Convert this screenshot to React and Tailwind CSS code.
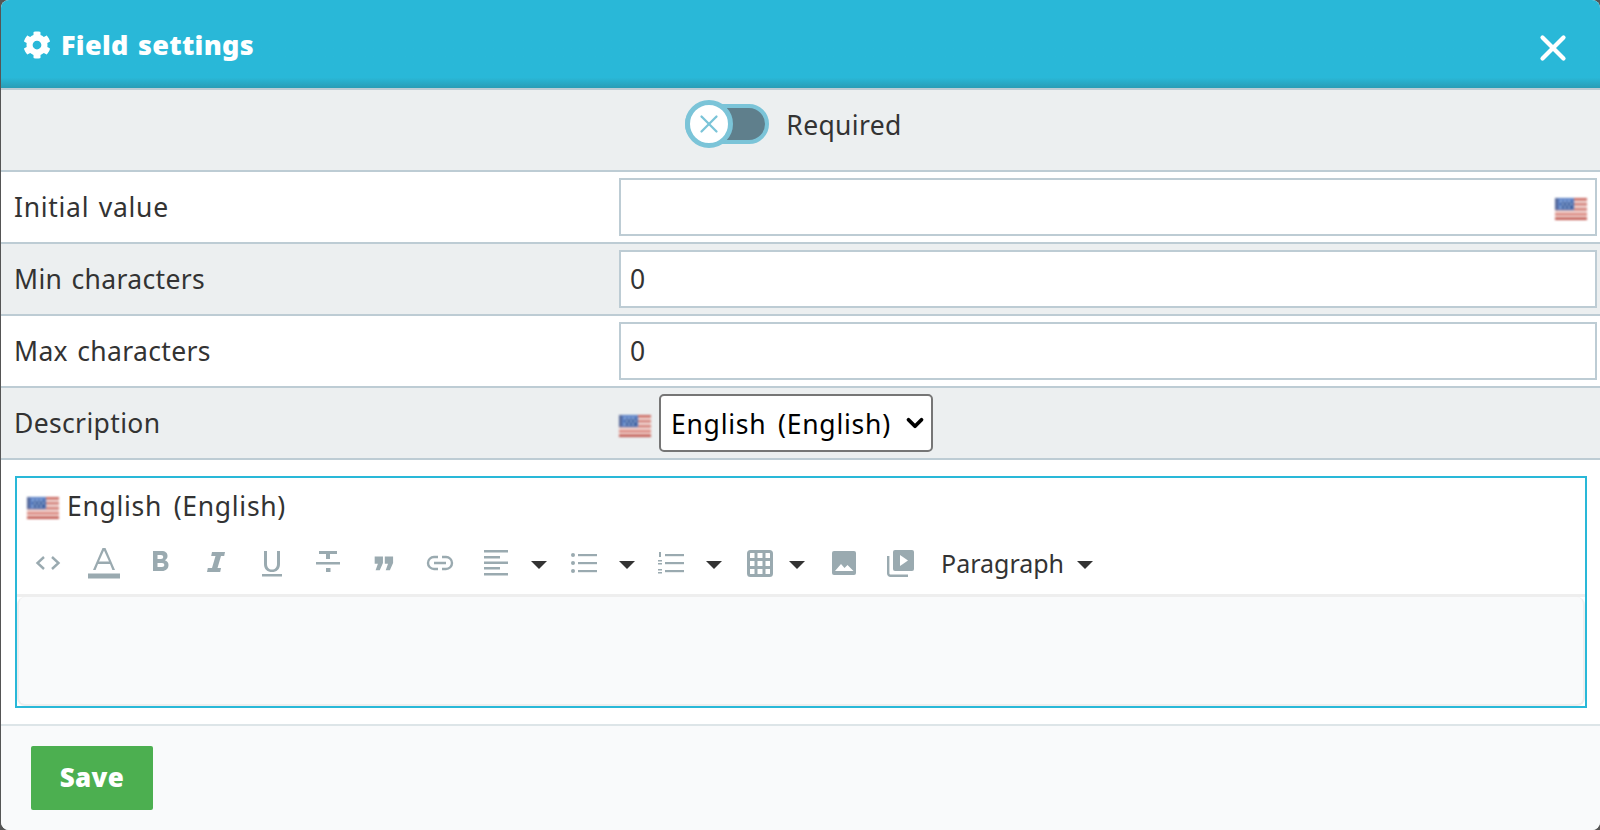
import React from "react";
import { FaCog } from "react-icons/fa";
import { X, ChevronDown } from "lucide-react";

function Flag() {
  return (
    <svg width="32" height="22" viewBox="0 0 32 22" className="shrink-0 block blur-[1px]">
      <rect width="32" height="22" fill="#f3dcd8" />
      <rect y="0" width="32" height="2.5" fill="#c9675f" />
      <rect y="5" width="32" height="2.5" fill="#d27f78" />
      <rect y="10" width="32" height="2.5" fill="#d27f78" />
      <rect y="15" width="32" height="2.5" fill="#d9857d" />
      <rect y="19.5" width="32" height="2.5" fill="#c0574f" />
      <rect width="19" height="12" fill="#5b80c4" />
      <rect x="0" width="3" height="12" fill="#56699b" />
      <rect x="6" y="4" width="12" height="7" fill="#3f5f9e" />
      <g fill="#b9d3f0">
        <rect x="5" y="2.5" width="2" height="1.5" />
        <rect x="9" y="2.5" width="2" height="1.5" />
        <rect x="13" y="2.5" width="2" height="1.5" />
        <rect x="7" y="5.5" width="2" height="1.5" />
        <rect x="11" y="5.5" width="2" height="1.5" />
        <rect x="15" y="5.5" width="2" height="1.5" />
        <rect x="5" y="8.5" width="2" height="1.5" />
        <rect x="9" y="8.5" width="2" height="1.5" />
        <rect x="13" y="8.5" width="2" height="1.5" />
      </g>
    </svg>
  );
}

function Caret({ className }) {
  return <span className={"shrink-0 w-0 h-0 mt-[4px] border-x-[8px] border-x-transparent border-t-[8px] border-t-[#333] " + className} />;
}

// toolbar glyphs, drawn on a 28x28 box in the grey of the editor
function Icon({ children }) {
  return (
    <svg width="28" height="28" viewBox="0 0 28 28" fill="#9aaab0" className="block">
      {children}
    </svg>
  );
}

function ToolButton({ children }) {
  return <div className="w-14 flex justify-center shrink-0">{children}</div>;
}

function Row({ label, striped, children }) {
  return (
    <div className={"flex items-center h-[72px] border-b-2 border-[#bdccd4] " + (striped ? "bg-[#eceff0]" : "bg-white")}>
      <div className="w-[618px] pl-[13px] shrink-0 pt-0.5">{label}</div>
      <div className="flex-1 pr-[3px] min-w-0">{children}</div>
    </div>
  );
}

function TextInput({ value }) {
  return (
    <input
      readOnly
      value={value}
      className="w-full h-[58px] border-2 border-[#bdccd4] bg-white px-[9px] text-[#333] outline-none"
    />
  );
}

export default function App() {
  return (
    <div className="h-[830px] overflow-hidden bg-[#555] pl-px">
      <div className="h-full flex flex-col rounded-lg overflow-hidden bg-white text-[#333] text-[26.5px] tracking-[0.35px] [word-spacing:2px] font-['Noto_Sans',sans-serif]">
        {/* Header */}
        <div className="h-[90px] shrink-0 flex items-center justify-between pl-[22px] pr-[26px] pt-[2px] border-b-2 border-[#bdccd4] bg-linear-to-b from-[#29b8d8] from-[88%] to-[#2a9db6] text-white">
          <div className="flex items-center gap-[10px]">
            <FaCog className="w-[28px] h-[28px]" />
            <span className="text-[27px] font-black tracking-[0.3px]">Field settings</span>
          </div>
          <X className="w-[42px] h-[42px] mt-[5px]" strokeWidth={2.4} />
        </div>

        {/* Required */}
        <div className="h-[82px] shrink-0 flex items-center justify-center gap-[17px] pr-[14px] pb-[8px] border-b-2 border-[#bdccd4] bg-[#eceff0]">
          <div className="relative w-[84px] h-[40px] mb-[4px] rounded-full border-[4px] border-[#7bc4d8] bg-[#5f7f8c]">
            <div className="absolute left-[-4px] top-[-8px] w-[48px] h-[48px] rounded-full border-[5px] border-[#7bc4d8] bg-white flex items-center justify-center">
              <X className="w-[30px] h-[30px] text-[#7bc4d8]" strokeWidth={1.8} />
            </div>
          </div>
          <span>Required</span>
        </div>

        <Row label={<span className="tracking-[0.7px]">Initial value</span>}>
          <div className="relative">
            <TextInput value="" />
            <div className="absolute right-[10px] top-[20px]">
              <Flag />
            </div>
          </div>
        </Row>
        <Row label="Min characters" striped>
          <TextInput value="0" />
        </Row>
        <Row label="Max characters">
          <TextInput value="0" />
        </Row>
        <Row label="Description" striped>
          <div className="flex items-center gap-2">
            <div className="pt-[6px]">
              <Flag />
            </div>
            <div className="relative w-[274px]">
              <select className="w-full h-[58px] appearance-none rounded-[5px] border-2 border-[#767676] bg-white pl-[10px] pt-[3px] text-black outline-none tracking-[0.75px] [word-spacing:4px]">
                <option>English (English)</option>
              </select>
              <ChevronDown className="absolute right-[5px] top-[16px] w-[26px] h-[26px] text-black pointer-events-none" strokeWidth={3.5} />
            </div>
          </div>
        </Row>

        {/* Editor */}
        <div className="h-[266px] shrink-0 px-[14px] pt-[16px] border-b-2 border-[#dde5e8]">
          <div className="h-[232px] w-[1572px] flex flex-col border-2 border-[#29b8d8]">
            <div className="flex items-center gap-[8px] pl-[10px] h-[58px] pt-[2px] shrink-0">
              <Flag />
              <span className="pb-[2px] tracking-[0.7px] [word-spacing:4px]">English (English)</span>
            </div>
            <div className="flex items-center h-[58px] shrink-0 pl-[3px] pb-[4px]">
              <ToolButton>
                <Icon>
                  <path d="M10 8 L3.5 14 L10 20 M18 8 L24.5 14 L18 20" fill="none" stroke="#9aaab0" strokeWidth="2.4" />
                </Icon>
              </ToolButton>
              <ToolButton>
                <svg width="32" height="32" viewBox="0 0 32 32" fill="#9aaab0" className="block">
                  <path d="M14.5 1h3L27 23h-2.6l-2.4-6H10l-2.4 6H5zM11 14.500h10L16 3.500z" fillRule="evenodd" />
                  <rect y="26.500" width="32" height="5" />
                </svg>
              </ToolButton>
              <ToolButton>
                <Icon>
                  <path d="M7 2h8.500c4 0 6 2 6 5 0 2-1 3.500-2.700 4.200 2.400.6 3.700 2.400 3.700 4.800 0 3.500-2.500 6-6.500 6H7zM11.500 6v4h3.500c1.500 0 2.200-.8 2.200-2s-.7-2-2.200-2zM11.500 14v4h4.500c1.500 0 2.300-.8 2.300-2s-.8-2-2.300-2z" fillRule="evenodd" />
                </Icon>
              </ToolButton>
              <ToolButton>
                <Icon>
                  <path d="M10 3h13l-.8 4H19l-3.500 12H19l-.8 4H5l.8-4H10l3.500-12H9.200z" />
                </Icon>
              </ToolButton>
              <ToolButton>
                <Icon>
                  <path d="M6 2h3v13c0 3.500 2 5.500 5 5.500s5-2 5-5.500V2h3v13c0 5.500-3.500 8-8 8s-8-2.500-8-8z" />
                  <rect x="4" y="25" width="20" height="2.500" />
                </Icon>
              </ToolButton>
              <ToolButton>
                <Icon>
                  <path d="M5 2h18v3h-7v5h-4V5H5z" />
                  <rect x="2" y="13" width="24" height="2.500" />
                  <rect x="12" y="19" width="4.500" height="4" />
                </Icon>
              </ToolButton>
              <ToolButton>
                <Icon>
                  <path d="M4 7h9v7l-3.500 8H5l2.500-7H4zM15 7h9v7l-3.500 8H16l2.500-7H15z" transform="translate(1 1) scale(.92)" />
                </Icon>
              </ToolButton>
              <ToolButton>
                <Icon>
                  <path d="M12 8H8a6 6 0 0 0 0 12h4M16 8h4a6 6 0 0 1 0 12h-4M8 14h12" fill="none" stroke="#9aaab0" strokeWidth="2.400" />
                </Icon>
              </ToolButton>
              <ToolButton>
                <svg width="24" height="26" viewBox="0 0 24 26" fill="#9aaab0" className="block">
                  <rect y="0" width="24" height="2.500" />
                  <rect y="6" width="16" height="2.500" />
                  <rect y="11.500" width="24" height="2.500" />
                  <rect y="17" width="16" height="2.500" />
                  <rect y="23" width="24" height="2.500" />
                </svg>
              </ToolButton>
              <Caret className="ml-[7px]" />
              <svg width="26" height="24" viewBox="0 0 26 24" fill="#9aaab0" className="block shrink-0 ml-[24px]">
                <circle cx="2" cy="4" r="2" />
                <circle cx="2" cy="12" r="2" />
                <circle cx="2" cy="20" r="2" />
                <rect x="7" y="3" width="19" height="2.200" />
                <rect x="7" y="11" width="19" height="2.200" />
                <rect x="7" y="19" width="19" height="2.200" />
              </svg>
              <Caret className="ml-[22px]" />
              <svg width="26" height="24" viewBox="0 0 26 24" fill="#9aaab0" className="block shrink-0 ml-[23px]">
                <rect x="1" y="1" width="2" height="5" />
                <rect x="0" y="9" width="4" height="1.500" />
                <rect x="0" y="12" width="4" height="1.500" />
                <rect x="0" y="18" width="4" height="1.500" />
                <rect x="0" y="21" width="4" height="1.500" />
                <rect x="7" y="3" width="19" height="2.200" />
                <rect x="7" y="11" width="19" height="2.200" />
                <rect x="7" y="19" width="19" height="2.200" />
              </svg>
              <Caret className="ml-[22px]" />
              <svg width="26" height="27" viewBox="0 0 26 27" fill="none" stroke="#9aaab0" strokeWidth="3" className="block shrink-0 ml-[25px]">
                <rect x="1.500" y="1.500" width="23" height="24" rx="2" />
                <path d="M9 1v25M17 1v25M1 9.500h24M1 17.500h24" />
              </svg>
              <Caret className="ml-[16px]" />
              <svg width="24" height="24" viewBox="0 0 24 24" className="block shrink-0 ml-[27px]">
                <rect width="24" height="24" rx="2" fill="#9aaab0" />
                <path d="M3 20l6-7 3.500 4 3-3 6 6z" fill="#fff" />
              </svg>
              <svg width="27" height="27" viewBox="0 0 27 27" className="block shrink-0 ml-[31px]">
                <path d="M1.200 6v17.500a2.300 2.300 0 0 0 2.300 2.300H21" fill="none" stroke="#9aaab0" strokeWidth="2.400" />
                <rect x="6" y="0" width="21" height="21" rx="2" fill="#9aaab0" />
                <path d="M13 5l8 5.500-8 5.500z" fill="#fff" />
              </svg>
              <span className="ml-[27px] text-[25px] tracking-normal pt-[2px]">Paragraph</span>
              <Caret className="ml-[13px]" />
            </div>
            <div className="flex-1 border-t-[3px] border-[#eeeeee]">
              <div className="h-full bg-[#f9fafb] border-2 border-t-0 border-[#eeeeee] rounded-lg" />
            </div>
          </div>
        </div>

        {/* Footer */}
        <div className="flex-1 bg-[#f9fafb] pl-[30px] pt-[20px]">
          <button className="w-[122px] h-[64px] pb-[2px] rounded-[2px] bg-[#4caf50] text-white text-[26px] font-black">Save</button>
        </div>
      </div>
    </div>
  );
}
